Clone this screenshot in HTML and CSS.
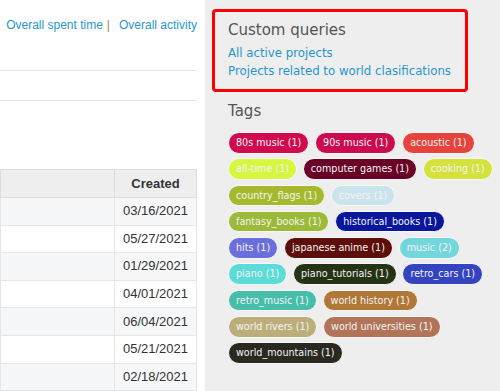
FILE: index.html
```html
<!DOCTYPE html>
<html>
<head>
<meta charset="utf-8">
<link rel="stylesheet" href="styles.css">
</head>
<body>
<div class="page">
  <main class="content">
    <div class="toplinks"><a href="#">Overall spent time</a><span class="sep">|</span><a href="#">Overall activity</a></div>
    <div class="box"></div>
    <table class="list">
      <thead>
        <tr><th class="name"></th><th class="created">Created</th></tr>
      </thead>
      <tbody>
        <tr class="odd"><td></td><td class="date">03/16/2021</td></tr>
        <tr class="even"><td></td><td class="date">05/27/2021</td></tr>
        <tr class="odd"><td></td><td class="date">01/29/2021</td></tr>
        <tr class="even"><td></td><td class="date">04/01/2021</td></tr>
        <tr class="odd"><td></td><td class="date">06/04/2021</td></tr>
        <tr class="even"><td></td><td class="date">05/21/2021</td></tr>
        <tr class="odd"><td></td><td class="date">02/18/2021</td></tr>
      </tbody>
    </table>
  </main>
  <aside class="sidebar">
    <div class="highlight">
      <h3 class="side-title">Custom queries</h3>
      <ul class="queries">
        <li><a href="#">All active projects</a></li>
        <li><a href="#">Projects related to world clasifications</a></li>
      </ul>
    </div>
    <h3 class="side-title tags-title">Tags</h3>
    <ul class="tags">
      <li class="tag t-80s">80s music (1)</li>
      <li class="tag t-90s">90s music (1)</li>
      <li class="tag t-acoustic">acoustic (1)</li>
      <li class="tag t-alltime">all-time (1)</li>
      <li class="tag t-games">computer games (1)</li>
      <li class="tag t-cooking">cooking (1)</li>
      <li class="tag t-flags">country_flags (1)</li>
      <li class="tag t-covers">covers (1)</li>
      <li class="tag t-fantasy">fantasy_books (1)</li>
      <li class="tag t-historical">historical_books (1)</li>
      <li class="tag t-hits">hits (1)</li>
      <li class="tag t-anime">japanese anime (1)</li>
      <li class="tag t-music">music (2)</li>
      <li class="tag t-piano">piano (1)</li>
      <li class="tag t-tutorials">piano_tutorials (1)</li>
      <li class="tag t-cars">retro_cars (1)</li>
      <li class="tag t-retro">retro_music (1)</li>
      <li class="tag t-history">world history (1)</li>
      <li class="tag t-rivers">world rivers (1)</li>
      <li class="tag t-univ">world universities (1)</li>
      <li class="tag t-mountains">world_mountains (1)</li>
    </ul>
  </aside>
</div>
</body>
</html>
```

FILE: styles.css
```css
html, body {
  margin: 0;
  padding: 0;
}

.page {
  display: flex;
  width: 500px;
  height: 391px;
  overflow: hidden;
  background: #eeeeee;
}

a {
  color: #2996cc;
  text-decoration: none;
}

.content {
  flex: 0 0 205px;
  box-sizing: border-box;
  padding-right: 8px;
  background: #ffffff;
}

.toplinks {
  margin-top: 17px;
  font: 12px/16px "Liberation Sans", Arial, sans-serif;
  text-align: right;
  white-space: nowrap;
}

.sep {
  color: #888888;
  margin: 0 9px 0 4px;
}

.box {
  margin-top: 37px;
  height: 29px;
  border-top: 1px solid #e6e6e6;
  border-bottom: 1px solid #e6e6e6;
}

.list {
  margin-top: 68px;
  width: 197px;
  border-collapse: collapse;
  font: 13px/16px "Liberation Sans", Arial, sans-serif;
  color: #333333;
}

.list th {
  height: 27px;
  padding: 0;
  background: #eeeeee;
  border: 1px solid #dddddd;
  font-weight: bold;
  text-align: center;
}

.list th.name {
  width: 113px;
}

.list td {
  height: 26.6px;
  padding: 0;
  border: 1px solid #e6e6e6;
}

.list td.date {
  text-align: center;
}

.list tr.odd td {
  background: #f6f7f8;
}

.list tr.even td {
  background: #ffffff;
}

.sidebar {
  flex: 1;
  box-sizing: border-box;
  padding: 9px 3px 0 23px;
  font-family: "DejaVu Sans", Verdana, sans-serif;
}

.highlight {
  margin-left: -16px;
  width: 256px;
  box-sizing: border-box;
  border: 3px solid #ff0000;
  border-radius: 4px;
  padding: 9px 13px 9px;
}

.side-title {
  margin: 0;
  font: normal 15px/18px "DejaVu Sans", Verdana, sans-serif;
  color: #555555;
}

.queries {
  list-style: none;
  margin: 5px 0 0;
  padding: 0;
  font-size: 11.75px;
  line-height: 18px;
  white-space: nowrap;
}

.tags-title {
  margin-top: 10px;
}

.tags {
  display: flex;
  flex-wrap: wrap;
  gap: 4.7px 5.8px;
  margin: 12px 0 0;
  padding: 0;
  list-style: none;
}

.tag {
  font: 9.6px/19.6px "DejaVu Sans", Verdana, sans-serif;
  color: #f4f4f4;
  padding: 0 7px;
  border: 1px solid #f8f8f8;
  border-radius: 11px;
  white-space: nowrap;
}

.t-80s { background: #d10a50; }
.t-90s { background: #cc0a4f; }
.t-acoustic { background: #e5433b; }
.t-alltime { background: #d6f640; }
.t-games { background: #6a0127; }
.t-cooking { background: #d5e23c; }
.t-flags { background: #a6b92d; }
.t-covers { background: #cbe3ec; }
.t-fantasy { background: #9cb937; }
.t-historical { background: #0a169c; }
.t-hits { background: #6b6fdc; }
.t-anime { background: #5e0e08; }
.t-music { background: #73d6dc; }
.t-piano { background: #5cdcd8; }
.t-tutorials { background: #253214; }
.t-cars { background: #3444c0; }
.t-retro { background: #46bea9; }
.t-history { background: #b07736; }
.t-rivers { background: #bcae7b; }
.t-univ { background: #b27459; }
.t-mountains { background: #2a2820; }
```
